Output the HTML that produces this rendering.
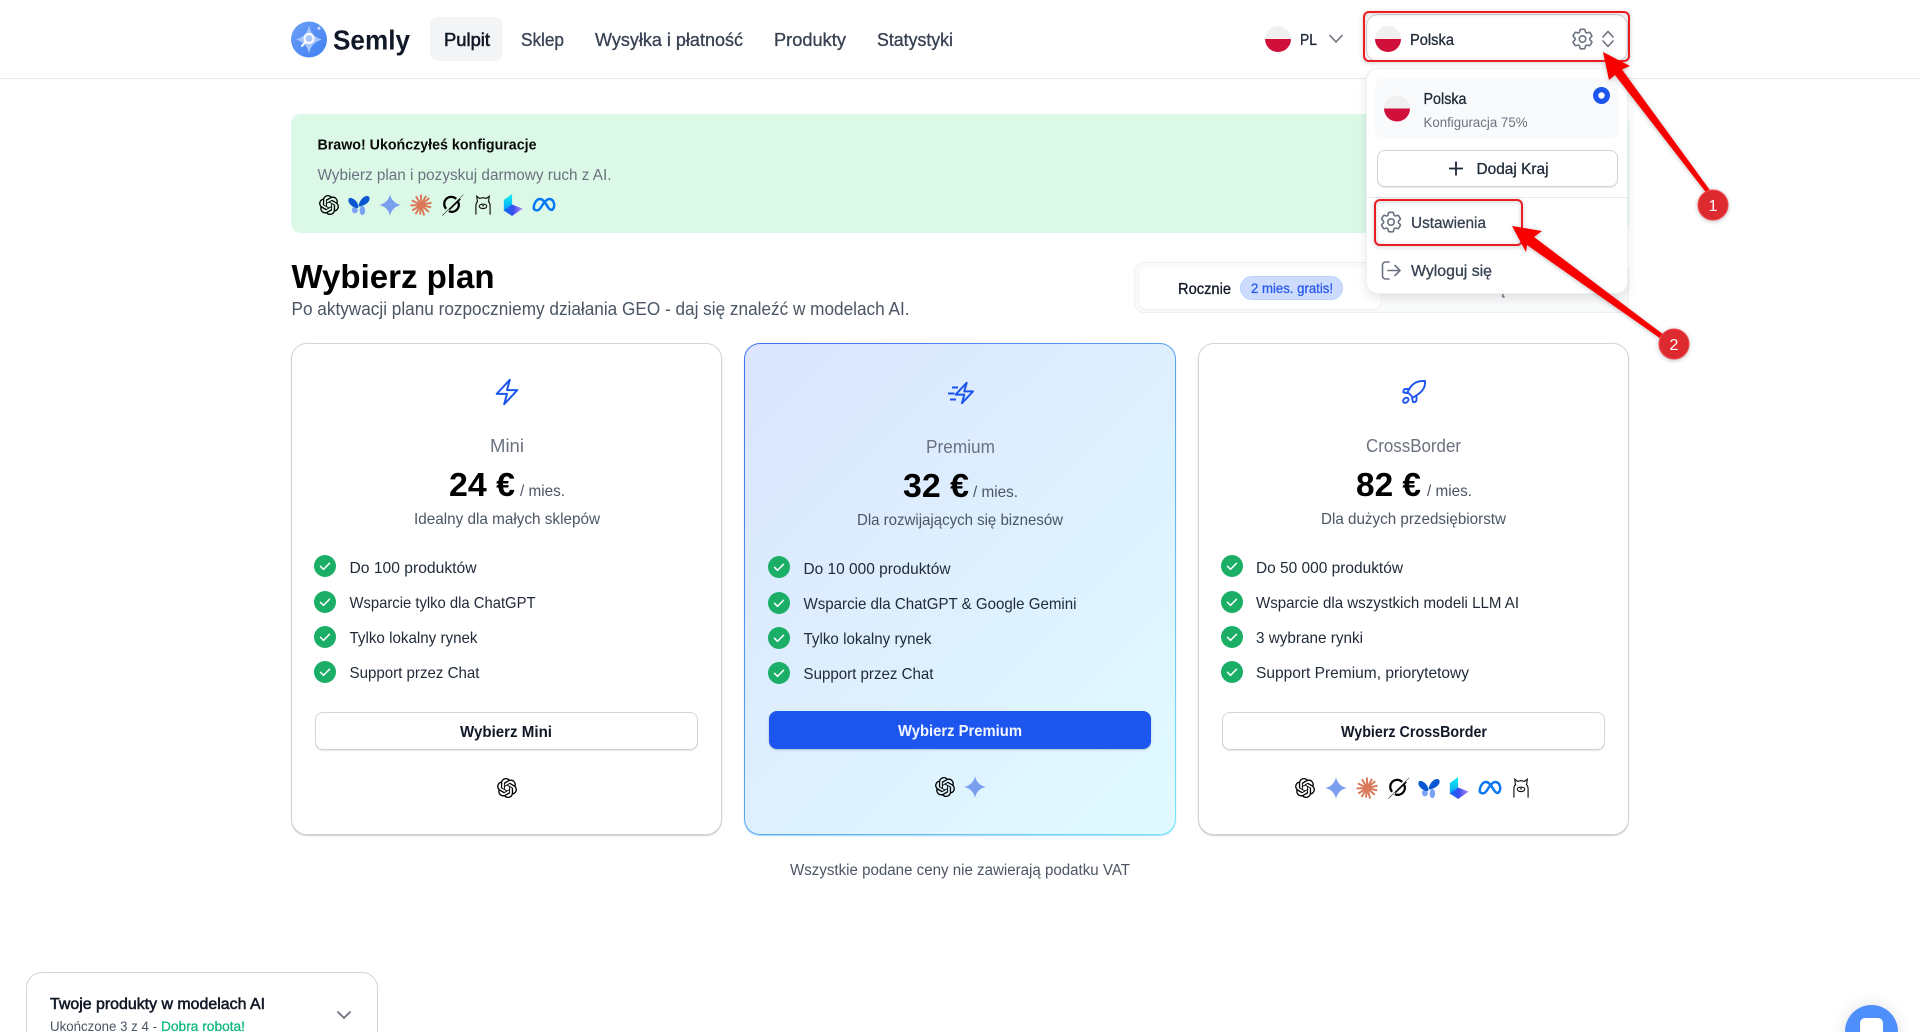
<!DOCTYPE html>
<html lang="pl"><head><meta charset="utf-8"><title>Semly</title>
<style>
html,body{margin:0;padding:0;background:#fff;width:1920px;height:1032px;overflow:hidden;font-family:"Liberation Sans",sans-serif}
#root{position:relative;width:1920px;height:1032px;overflow:hidden;background:#fff}
.b{position:absolute;box-sizing:border-box}
svg.l{position:absolute;left:0;top:0;width:1920px;height:1032px;overflow:hidden}
text{font-family:"Liberation Sans",sans-serif;fill:currentColor;stroke:currentColor;stroke-width:0;font-size:16px}
.m{stroke-width:.3px}.s{stroke-width:.55px}.w{font-weight:700}
.k{color:#111827}.g7{color:#374151}.g6{color:#4b5563}.g5{color:#6b7280}.g8{color:#1f2937}
.card{top:343px;height:492px;width:431px;background:#fff;border:1px solid #d1d5db;border-radius:16px;box-shadow:0 1px 1px rgba(60,70,90,.28)}
.btn{background:#fff;border:1px solid #d1d5db;border-radius:8px;box-shadow:0 1px 1px rgba(0,0,0,.1)}
</style></head><body>
<div id="root">

<svg width="0" height="0" style="position:absolute"><defs>
<symbol id="openai" viewBox="0 0 24 24"><path fill="#000" d="M22.2819 9.8211a5.9847 5.9847 0 0 0-.5157-4.9108 6.0462 6.0462 0 0 0-6.5098-2.9A6.0651 6.0651 0 0 0 4.9807 4.1818a5.9847 5.9847 0 0 0-3.9977 2.9 6.0462 6.0462 0 0 0 .7427 7.0966 5.98 5.98 0 0 0 .511 4.9107 6.051 6.051 0 0 0 6.5146 2.9001A5.9847 5.9847 0 0 0 13.2599 24a6.0557 6.0557 0 0 0 5.7718-4.2058 5.9894 5.9894 0 0 0 3.9977-2.9001 6.0557 6.0557 0 0 0-.7475-7.0729zm-9.022 12.6081a4.4755 4.4755 0 0 1-2.8764-1.0408l.1419-.0804 4.7783-2.7582a.7948.7948 0 0 0 .3927-.6813v-6.7369l2.02 1.1686a.071.071 0 0 1 .038.052v5.5826a4.504 4.504 0 0 1-4.4945 4.4944zm-9.6607-4.1254a4.4708 4.4708 0 0 1-.5346-3.0137l.142.0852 4.783 2.7582a.7712.7712 0 0 0 .7806 0l5.8428-3.3685v2.3324a.0804.0804 0 0 1-.0332.0615L9.74 19.9502a4.4992 4.4992 0 0 1-6.1408-1.6464zM2.3408 7.8956a4.485 4.485 0 0 1 2.3655-1.9728V11.6a.7664.7664 0 0 0 .3879.6765l5.8144 3.3543-2.0201 1.1685a.0757.0757 0 0 1-.071 0l-4.8303-2.7865A4.504 4.504 0 0 1 2.3408 7.872zm16.5963 3.8558L13.1038 8.364 15.1192 7.2a.0757.0757 0 0 1 .071 0l4.8303 2.7913a4.4944 4.4944 0 0 1-.6765 8.1042v-5.6772a.79.79 0 0 0-.407-.667zm2.0107-3.0231l-.142-.0852-4.7735-2.7818a.7759.7759 0 0 0-.7854 0L9.409 9.2297V6.8974a.0662.0662 0 0 1 .0284-.0615l4.8303-2.7866a4.4992 4.4992 0 0 1 6.6802 4.66zM8.3065 12.863l-2.02-1.1638a.0804.0804 0 0 1-.038-.0567V6.0742a4.4992 4.4992 0 0 1 7.3757-3.4537l-.142.0805L8.704 5.459a.7948.7948 0 0 0-.3927.6813zm1.0976-2.3654l2.602-1.4998 2.6069 1.4998v2.9994l-2.5974 1.4997-2.6067-1.4997Z"/></symbol>
<symbol id="gemini" viewBox="0 0 24 24"><path fill="#7a9fef" d="M12 24A14.304 14.304 0 0 0 0 12 14.304 14.304 0 0 0 12 0a14.304 14.304 0 0 0 12 12 14.304 14.304 0 0 0-12 12"/></symbol>
<symbol id="claude" viewBox="0 0 24 24"><path stroke="#d97757" stroke-width="2.1" fill="none" d="M12 12V.5M12 12L17.5 2M12 12L21 4.5M12 12L23.5 9.5M12 12L23 14.5M12 12L20.5 19.5M12 12L15.5 23.5M12 12L11 22.5M12 12L6 22M12 12L2.5 18M12 12L.5 12.5M12 12L2 7M12 12L6.5 2.5"/></symbol>
<symbol id="grok" viewBox="0 0 24 24"><path fill="none" stroke="#000" stroke-width="2.5" d="M15.5 5.400A7.600 7.600 0 0 0 4.600 16M17.600 8.600A7.600 7.600 0 0 1 7.400 18.700"/><path fill="#333" d="M23 .5L0 23.500l.6.4L23.400 1z"/><path fill="none" stroke="#000" stroke-width="1.500" d="M20 5.500L8 17"/></symbol>
<symbol id="fly" viewBox="0 0 24 24"><ellipse cx="7.500" cy="17.500" rx="3.200" ry="3.600" fill="#7aa3f5"/><ellipse cx="15.700" cy="18" rx="3" ry="5" fill="#7aa3f5"/><path fill="#0b57d0" d="M.5 6C1 3 5 4 8 7c2 2 3 4 3.500 8C9 16 5 14 3 12 1 10 0 8 .5 6zM11.500 13c.5-4 3.500-9 7.500-10.500 3-1 5 .5 4.500 3.500C23 9 19 12 15 13c-1 .5-2.500 1-3.500 0z"/></symbol>
<symbol id="llama" viewBox="0 0 24 24"><path fill="none" stroke="#111" stroke-width="1.400" d="M3.500 23.500V13c0-2.500.8-3.800 1.800-5L4.500 1.500 8 4.200C9.500 3.500 10.800 3.300 12 3.300s2.500.2 4 .9L19.500 1.500 18.700 8c1 1.200 1.800 2.500 1.800 5v10.500"/><path fill="none" stroke="#111" stroke-width="1.300" d="M7.500 13.500c0-1.500 2-2.500 4.500-2.500s4.500 1 4.500 2.500-2 2.800-4.500 2.800-4.500-1.300-4.500-2.800z"/><circle cx="12" cy="13" r="1" fill="#111"/></symbol>
<symbol id="cube" viewBox="0 0 24 24"><defs><linearGradient id="c1" x1="0" y1="0" x2="0" y2="1"><stop offset="0" stop-color="#0ff0f0"/><stop offset="1" stop-color="#0a9bf5"/></linearGradient><linearGradient id="c2" x1="0" y1="0" x2="1" y2="0"><stop offset="0" stop-color="#0a6ff0"/><stop offset=".5" stop-color="#3a4ff0"/><stop offset="1" stop-color="#b58bf5"/></linearGradient></defs><path fill="url(#c1)" d="M2 6.500L11 0v15L2 19z"/><path fill="url(#c2)" d="M2 18l9-6.500L22.500 16 11 24z"/></symbol>
<symbol id="meta" viewBox="0 0 24 24"><path fill="none" stroke="#0a78f5" stroke-width="2.300" d="M2.500 15.500c0-5 2.700-9 5.700-9 3.500 0 5.800 5 7.800 8 1.500 2.200 3.200 2.700 4.300 1.200 1-1.300 1.400-3.200.9-5.200-.7-3-2.500-4-4.200-4-2.500 0-4.900 3-7.400 7-1.800 3-3 3.700-4.600 3.400-1.600-.3-2.500-1.200-2.500-2.400z"/></symbol>
<symbol id="gear" viewBox="0 0 24 24"><g fill="none" stroke="#6b7280" stroke-width="1.500" stroke-linecap="round" stroke-linejoin="round"><path d="M9.594 3.940c.09-.542.56-.94 1.110-.94h2.593c.55 0 1.020.398 1.110.94l.213 1.281c.063.374.313.686.645.870.074.04.147.083.22.127.324.196.72.257 1.075.124l1.217-.456a1.125 1.125 0 0 1 1.370.49l1.296 2.247a1.125 1.125 0 0 1-.26 1.431l-1.003.827c-.293.24-.438.613-.431.992a6.759 6.759 0 0 1 0 .255c-.007.378.138.75.43.99l1.005.828c.424.35.534.954.26 1.430l-1.298 2.247a1.125 1.125 0 0 1-1.369.491l-1.217-.456c-.355-.133-.75-.072-1.076.124a6.570 6.570 0 0 1-.22.128c-.331.183-.581.495-.644.869l-.213 1.280c-.09.543-.56.941-1.110.941h-2.594c-.55 0-1.020-.398-1.110-.94l-.213-1.281c-.062-.374-.312-.686-.644-.87a6.520 6.520 0 0 1-.22-.127c-.325-.196-.72-.257-1.076-.124l-1.217.456a1.125 1.125 0 0 1-1.369-.49l-1.297-2.247a1.125 1.125 0 0 1 .26-1.431l1.004-.827c.292-.24.437-.613.43-.992a6.932 6.932 0 0 1 0-.255c.007-.378-.138-.75-.43-.99l-1.004-.828a1.125 1.125 0 0 1-.26-1.430l1.297-2.247a1.125 1.125 0 0 1 1.370-.491l1.216.456c.356.133.751.072 1.076-.124.072-.044.146-.087.22-.128.332-.183.582-.495.644-.869l.214-1.281z"/><path d="M15 12a3 3 0 1 1-6 0 3 3 0 0 1 6 0z"/></g></symbol>
<symbol id="flag" viewBox="0 0 26 26"><clipPath id="fc"><circle cx="13" cy="13" r="13"/></clipPath><g clip-path="url(#fc)"><rect width="26" height="13" fill="#f0f0f0"/><rect y="13" width="26" height="13" fill="#d0103a"/></g></symbol>
<symbol id="chk" viewBox="0 0 22 22"><circle cx="11" cy="11" r="11" fill="#1aae67"/><path d="M6.500 11.300l3 3 6-6" fill="none" stroke="#fff" stroke-width="1.500" stroke-linecap="round" stroke-linejoin="round"/></symbol>
</defs></svg>

<!-- header -->
<div class="b" style="left:0;top:0;width:1920px;height:79px;background:#fff;border-bottom:1px solid #e8e9ec"></div>
<div class="b" style="left:430px;top:17px;width:73px;height:44px;background:#f3f4f6;border-radius:8px"></div>
<div class="b" style="left:1366px;top:14px;width:262px;height:48px;background:#fff;border:1px solid #d1d5db;border-radius:12px"></div>

<!-- banner -->
<div class="b" style="left:291px;top:114px;width:1338px;height:119px;background:#dcf8e7;border-radius:10px"></div>

<!-- toggle -->
<div class="b" style="left:1134px;top:262px;width:495px;height:51px;background:#f9fafb;border:1px solid #eef0f2;border-radius:10px"></div>
<div class="b" style="left:1139px;top:267px;width:242px;height:42px;background:#fff;border-radius:8px;box-shadow:0 1px 2px rgba(0,0,0,.06)"></div>
<div class="b" style="left:1240px;top:276px;width:103px;height:24px;background:#cddcfe;border:1px solid #bcd0fc;border-radius:12px"></div>

<!-- cards -->
<div class="b card" style="left:291px"></div>
<div class="b card" style="left:744px;width:432px;border:1px solid transparent;background:linear-gradient(135deg,#dbe5fe,#e0faff) padding-box,linear-gradient(135deg,#3f6ff0,#5fb0f2 60%,#72e8f8) border-box;box-shadow:0 1px 1px rgba(80,170,235,.5)"></div>
<div class="b card" style="left:1198px"></div>
<div class="b btn" style="left:315px;top:712px;width:383px;height:38px"></div>
<div class="b" style="left:769px;top:711px;width:382px;height:38px;background:#1d56ee;border-radius:8px;box-shadow:0 1px 2px rgba(0,0,0,.2)"></div>
<div class="b btn" style="left:1222px;top:712px;width:383px;height:38px"></div>

<!-- bottom widget and chat -->
<div class="b" style="left:26px;top:972px;width:352px;height:90px;background:#fff;border:1px solid #d1d5db;border-radius:16px"></div>
<div class="b" style="left:1845px;top:1005px;width:53px;height:53px;background:#4f8ffb;border-radius:50%;box-shadow:0 0 16px rgba(0,0,0,.12)"></div>
<div class="b" style="left:1860px;top:1018px;width:23px;height:24px;background:#fff;border-radius:5px"></div>

<svg class="l" viewBox="0 0 1920 1032">
<!-- logo -->
<defs><linearGradient id="lg" x1="0" y1="0" x2="1" y2="1"><stop offset="0" stop-color="#6ea0f7"/><stop offset="1" stop-color="#3f7ff2"/></linearGradient></defs>
<circle cx="309" cy="39.500" r="18" fill="url(#lg)"/>
<path d="M309 25c1.500 8 5 12 13 14.500-8 2.500-11.500 6.500-13 14.500-1.500-8-5-12-13-14.500 8-2.500 11.500-6.500 13-14.500z" fill="#a9c6fb"/>
<circle cx="309" cy="38.500" r="4.500" fill="none" stroke="#fff" stroke-width="2"/>
<path d="M305.500 42l-3.500 4" stroke="#fff" stroke-width="2" stroke-linecap="round"/>
<path d="M319 25.500c.3 1.700 1 2.400 2.700 2.700-1.700.3-2.400 1-2.700 2.700-.3-1.700-1-2.400-2.700-2.700 1.700-.3 2.400-1 2.700-2.700z" fill="#cfe0fd"/>
<text x="333" y="49.500" class="k w" style="font-size:28px" textLength="77" lengthAdjust="spacingAndGlyphs">Semly</text>

<text x="444" y="46" class="k s" style="font-size:18px" textLength="46" lengthAdjust="spacingAndGlyphs">Pulpit</text>
<text x="521" y="46" class="g7 m" style="font-size:18px" textLength="43" lengthAdjust="spacingAndGlyphs">Sklep</text>
<text x="595" y="46" class="g7 m" style="font-size:18px" textLength="148" lengthAdjust="spacingAndGlyphs">Wysyłka i płatność</text>
<text x="774" y="46" class="g7 m" style="font-size:18px" textLength="72" lengthAdjust="spacingAndGlyphs">Produkty</text>
<text x="877" y="46" class="g7 m" style="font-size:18px" textLength="76" lengthAdjust="spacingAndGlyphs">Statystyki</text>

<use href="#flag" x="1265" y="26" width="26" height="26"/>
<text x="1300" y="45" class="g8 m" textLength="17" lengthAdjust="spacingAndGlyphs">PL</text>
<path d="M1330 35.500l6 6.500 6-6.500" fill="none" stroke="#6b7280" stroke-width="1.600" stroke-linecap="round" stroke-linejoin="round"/>
<use href="#flag" x="1375" y="26" width="26" height="26"/>
<text x="1410" y="45" class="g8 m" textLength="44" lengthAdjust="spacingAndGlyphs">Polska</text>
<use href="#gear" x="1569.500" y="26" width="26" height="26"/>
<path d="M1603 37l5-5.500 5 5.500M1603 41l5 5.500 5-5.500" fill="none" stroke="#6b7280" stroke-width="1.600" stroke-linecap="round" stroke-linejoin="round"/>

<!-- banner text -->
<text x="317.500" y="149.500" class="w" style="font-size:15px;color:#0a0a0a" textLength="219" lengthAdjust="spacingAndGlyphs">Brawo! Ukończyłeś konfiguracje</text>
<text x="317.500" y="180" class="g5" style="font-size:15.500px" textLength="294" lengthAdjust="spacingAndGlyphs">Wybierz plan i pozyskuj darmowy ruch z AI.</text>
<use href="#openai" x="319" y="195" width="20" height="20"/>
<use href="#fly" x="348" y="194" width="22" height="22"/>
<use href="#gemini" x="379" y="194" width="22" height="22"/>
<use href="#claude" x="410" y="194" width="22" height="22"/>
<use href="#grok" x="442" y="194" width="22" height="22"/>
<use href="#llama" x="473" y="195" width="20" height="20"/>
<use href="#cube" x="502" y="194" width="22" height="22"/>
<use href="#meta" x="531" y="192" width="26" height="26"/>

<!-- title -->
<text x="291.500" y="288" class="w" style="font-size:33px;color:#000" textLength="203" lengthAdjust="spacingAndGlyphs">Wybierz plan</text>
<text x="291.500" y="315" class="g6" style="font-size:18px" textLength="618" lengthAdjust="spacingAndGlyphs">Po aktywacji planu rozpoczniemy działania GEO - daj się znaleźć w modelach AI.</text>

<!-- toggle text -->
<text x="1178" y="294" class="k m" textLength="53" lengthAdjust="spacingAndGlyphs">Rocznie</text>
<text x="1251" y="293" class="m" style="font-size:14px;color:#2a5bed" textLength="82" lengthAdjust="spacingAndGlyphs">2 mies. gratis!</text>
<text x="1503" y="294" class="g7" text-anchor="middle">Miesięcznie</text>

<!-- card 1 -->
<path transform="translate(492,377) scale(1.250)" d="M3.750 13.500l10.500-11.250L12 10.500h8.250L9.750 21.750 12 13.500H3.750z" fill="none" stroke="#1d56ee" stroke-width="1.600" stroke-linejoin="round"/>
<text x="490" y="452" class="g5" style="font-size:18px" textLength="34" lengthAdjust="spacingAndGlyphs">Mini</text>
<text x="449" y="496" class="w" style="font-size:33px;color:#000" textLength="66" lengthAdjust="spacingAndGlyphs">24 €</text>
<text x="520" y="496" class="g6" textLength="45" lengthAdjust="spacingAndGlyphs">/ mies.</text>
<text x="414" y="524" class="g6" textLength="186" lengthAdjust="spacingAndGlyphs">Idealny dla małych sklepów</text>
<use href="#chk" x="314" y="555" width="22" height="22"/><text x="349.500" y="573" class="g8" textLength="127" lengthAdjust="spacingAndGlyphs">Do 100 produktów</text>
<use href="#chk" x="314" y="591" width="22" height="22"/><text x="349.500" y="608" class="g8" textLength="186" lengthAdjust="spacingAndGlyphs">Wsparcie tylko dla ChatGPT</text>
<use href="#chk" x="314" y="626" width="22" height="22"/><text x="349.500" y="643" class="g8" textLength="128" lengthAdjust="spacingAndGlyphs">Tylko lokalny rynek</text>
<use href="#chk" x="314" y="661" width="22" height="22"/><text x="349.500" y="678" class="g8" textLength="130" lengthAdjust="spacingAndGlyphs">Support przez Chat</text>
<text x="460" y="737" class="k w" textLength="92" lengthAdjust="spacingAndGlyphs">Wybierz Mini</text>
<use href="#openai" x="497" y="778" width="20" height="20"/>

<!-- card 2 -->
<path transform="translate(951.700,380.400) scale(1.050)" d="M3.750 13.500l10.500-11.250L12 10.500h8.250L9.750 21.750 12 13.500H3.750z" fill="none" stroke="#1d56ee" stroke-width="1.900" stroke-linejoin="round"/>
<path d="M952 387.500h6M948 393.500h6.500M950 399.500h6" fill="none" stroke="#1d56ee" stroke-width="2"/>
<text x="926" y="453" class="g5" style="font-size:18px" textLength="69" lengthAdjust="spacingAndGlyphs">Premium</text>
<text x="903" y="497" class="w" style="font-size:33px;color:#000" textLength="66" lengthAdjust="spacingAndGlyphs">32 €</text>
<text x="973" y="497" class="g6" textLength="45" lengthAdjust="spacingAndGlyphs">/ mies.</text>
<text x="857" y="525" class="g6" textLength="206" lengthAdjust="spacingAndGlyphs">Dla rozwijających się biznesów</text>
<use href="#chk" x="768" y="556" width="22" height="22"/><text x="803.500" y="574" class="g8" textLength="147" lengthAdjust="spacingAndGlyphs">Do 10 000 produktów</text>
<use href="#chk" x="768" y="592" width="22" height="22"/><text x="803.500" y="609" class="g8" textLength="273" lengthAdjust="spacingAndGlyphs">Wsparcie dla ChatGPT &amp; Google Gemini</text>
<use href="#chk" x="768" y="627" width="22" height="22"/><text x="803.500" y="644" class="g8" textLength="128" lengthAdjust="spacingAndGlyphs">Tylko lokalny rynek</text>
<use href="#chk" x="768" y="662" width="22" height="22"/><text x="803.500" y="679" class="g8" textLength="130" lengthAdjust="spacingAndGlyphs">Support przez Chat</text>
<text x="898" y="736" class="w" style="color:#f2f6ff" textLength="124" lengthAdjust="spacingAndGlyphs">Wybierz Premium</text>
<use href="#openai" x="935" y="777" width="20" height="20"/>
<use href="#gemini" x="964" y="776" width="22" height="22"/>

<!-- card 3 -->
<g transform="translate(1402,380)" fill="none" stroke="#1d56ee" stroke-width="1.900" stroke-linecap="round" stroke-linejoin="round"><path d="M23 1c-6-.5-11 1.500-14.500 6L5.500 12l5.500 5.500 5.500-3.500C21 10.500 23.500 7 23 1z"/><path d="M7.500 9H3.500c-1.500 0-2.500 1.500-2 3.500l4 .5M14.500 16v4c0 1.500-1.500 2.500-3.500 2l-1-4"/><ellipse cx="3.800" cy="20.300" rx="3" ry="2.200" transform="rotate(-40 3.800 20.300)"/></g>
<text x="1366" y="452" class="g5" style="font-size:18px" textLength="95" lengthAdjust="spacingAndGlyphs">CrossBorder</text>
<text x="1356" y="496" class="w" style="font-size:33px;color:#000" textLength="65" lengthAdjust="spacingAndGlyphs">82 €</text>
<text x="1427" y="496" class="g6" textLength="45" lengthAdjust="spacingAndGlyphs">/ mies.</text>
<text x="1321" y="524" class="g6" textLength="185" lengthAdjust="spacingAndGlyphs">Dla dużych przedsiębiorstw</text>
<use href="#chk" x="1221" y="555" width="22" height="22"/><text x="1256" y="573" class="g8" textLength="147" lengthAdjust="spacingAndGlyphs">Do 50 000 produktów</text>
<use href="#chk" x="1221" y="591" width="22" height="22"/><text x="1256" y="608" class="g8" textLength="263" lengthAdjust="spacingAndGlyphs">Wsparcie dla wszystkich modeli LLM AI</text>
<use href="#chk" x="1221" y="626" width="22" height="22"/><text x="1256" y="643" class="g8" textLength="107" lengthAdjust="spacingAndGlyphs">3 wybrane rynki</text>
<use href="#chk" x="1221" y="661" width="22" height="22"/><text x="1256" y="678" class="g8" textLength="213" lengthAdjust="spacingAndGlyphs">Support Premium, priorytetowy</text>
<text x="1341" y="737" class="k w" textLength="146" lengthAdjust="spacingAndGlyphs">Wybierz CrossBorder</text>
<use href="#openai" x="1295" y="778" width="20" height="20"/>
<use href="#gemini" x="1325" y="777" width="22" height="22"/>
<use href="#claude" x="1356" y="777" width="22" height="22"/>
<use href="#grok" x="1388" y="777" width="22" height="22"/>
<use href="#fly" x="1418" y="777" width="22" height="22"/>
<use href="#cube" x="1448" y="777" width="22" height="22"/>
<use href="#meta" x="1477" y="775" width="26" height="26"/>
<use href="#llama" x="1511" y="778" width="20" height="20"/>

<text x="790" y="875" class="g6" style="font-size:15.500px" textLength="340" lengthAdjust="spacingAndGlyphs">Wszystkie podane ceny nie zawierają podatku VAT</text>

<!-- bottom widget -->
<text x="50" y="1009" class="k s" textLength="215" lengthAdjust="spacingAndGlyphs">Twoje produkty w modelach AI</text>
<text x="50" y="1031" class="g6" style="font-size:14px" textLength="107" lengthAdjust="spacingAndGlyphs">Ukończone 3 z 4 -</text>
<text x="161" y="1031" class="m" style="font-size:14px;color:#10b981" textLength="84" lengthAdjust="spacingAndGlyphs">Dobra robota!</text>
<path d="M338 1012l6 6 6-6" fill="none" stroke="#6b7280" stroke-width="1.800" stroke-linecap="round" stroke-linejoin="round"/>
</svg>

<!-- dropdown -->
<div class="b" style="left:1366px;top:68px;width:262px;height:226px;background:#fff;border:1px solid #eef0f2;border-radius:12px;box-shadow:0 4px 10px rgba(0,0,0,.1)"></div>
<div class="b" style="left:1375px;top:78px;width:244px;height:61px;background:#f9fafb;border-radius:8px"></div>
<div class="b btn" style="left:1377px;top:150px;width:241px;height:37px"></div>
<div class="b" style="left:1366px;top:197px;width:262px;height:1px;background:#e8e9ec"></div>

<svg class="l" viewBox="0 0 1920 1032">
<use href="#flag" x="1384" y="95" width="26" height="27"/>
<text x="1423.500" y="104" class="g8 m" textLength="43" lengthAdjust="spacingAndGlyphs">Polska</text>
<text x="1423.500" y="127" class="g5" style="font-size:14px" textLength="104" lengthAdjust="spacingAndGlyphs">Konfiguracja 75%</text>
<circle cx="1601.500" cy="95.500" r="8.500" fill="#1d56ee"/><circle cx="1601.500" cy="95.500" r="3.200" fill="#fff"/>
<path d="M1456 161.500v14M1449 168.500h14" stroke="#1f2937" stroke-width="1.800" fill="none"/>
<text x="1476.500" y="174" class="g8 m" textLength="72" lengthAdjust="spacingAndGlyphs">Dodaj Kraj</text>
<use href="#gear" x="1378" y="209" width="26" height="26"/>
<text x="1411" y="228" class="g7 m" textLength="75" lengthAdjust="spacingAndGlyphs">Ustawienia</text>
<path d="M1389 262h-3.500a3 3 0 0 0-3 3v11a3 3 0 0 0 3 3h3.500M1388 270.500h11.500M1395 265.500l5 5-5 5" fill="none" stroke="#6b7280" stroke-width="1.600" stroke-linecap="round" stroke-linejoin="round"/>
<text x="1411" y="276" class="g7 m" textLength="81" lengthAdjust="spacingAndGlyphs">Wyloguj się</text>

<!-- annotations -->
<g style="filter:drop-shadow(0 1px 2px rgba(0,0,0,.25))">
<rect x="1364" y="12" width="265" height="49" rx="5" fill="none" stroke="#ea1c24" stroke-width="2"/>
<rect x="1375" y="200" width="147" height="45" rx="5" fill="none" stroke="#ea1c24" stroke-width="2"/>
<path fill="#f90000" d="M1603 52L1630 66 1622 69.500 1712 193 1708 195 1615 75 1609 80z"/>
<path fill="#f90000" d="M1512 226L1542 231 1534 237 1668 338 1664 341 1527 245 1526 252z"/>
<circle cx="1713" cy="205" r="15" fill="#dc2a2f" stroke="#f04a4f" stroke-width="1"/>
<circle cx="1674" cy="344" r="15" fill="#dc2a2f" stroke="#f04a4f" stroke-width="1"/>
</g>
<text x="1713" y="211" text-anchor="middle" style="font-size:16px;color:#fff">1</text>
<text x="1674" y="350" text-anchor="middle" style="font-size:16px;color:#fff">2</text>
</svg>
</div>
</body></html>
